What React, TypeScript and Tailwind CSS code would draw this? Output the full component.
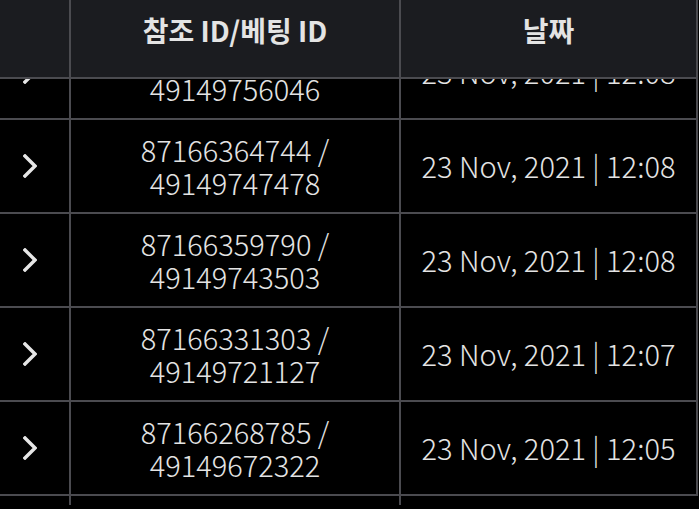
const rows = [
  { ref: '87166372210', bet: '49149756046', date: '23 Nov, 2021 | 12:08' },
  { ref: '87166364744', bet: '49149747478', date: '23 Nov, 2021 | 12:08' },
  { ref: '87166359790', bet: '49149743503', date: '23 Nov, 2021 | 12:08' },
  { ref: '87166331303', bet: '49149721127', date: '23 Nov, 2021 | 12:07' },
  { ref: '87166268785', bet: '49149672322', date: '23 Nov, 2021 | 12:05' },
]

function Chevron() {
  return (
    <svg width="14" height="24" viewBox="0 0 14 24" fill="none">
      <polyline points="2,2 12,12 2,22" stroke="#e6e6e6" strokeWidth="3.4" strokeLinecap="square" />
    </svg>
  )
}

export default function App() {
  return (
    <div
      className="w-[699px] h-[509px] bg-black overflow-hidden text-[#e4e4e4]"
      style={{ fontFamily: '"Noto Sans CJK KR", "Noto Sans", sans-serif' }}
    >
      <div className="w-[698px]">
        <div className="flex h-[79px] bg-[#1b1c20] border-b-2 border-[#4b4b50]">
          <div className="w-[71px] border-r-2 border-[#4b4b50]" />
          <div className="w-[330px] border-r-2 border-[#4b4b50] flex justify-center pt-[9px] text-[28px] font-bold">
            참조 ID/베팅 ID
          </div>
          <div className="w-[297px] border-r-2 border-[#4b4b50] flex justify-center pt-[9px] text-[28px] font-bold">
            날짜
          </div>
        </div>
        <div className="h-[430px] overflow-hidden">
          <div className="-mt-[53px]">
            {rows.map((r) => (
              <div key={r.ref} className="flex h-[94px] border-b-2 border-[#4b4b50]">
                <div className="w-[71px] border-r-2 border-[#4b4b50] flex items-center pl-[23px]">
                  <Chevron />
                </div>
                <div className="w-[330px] border-r-2 border-[#4b4b50] flex flex-col items-center justify-center text-[29px] leading-[33px] font-light">
                  <span>{r.ref} /</span>
                  <span>{r.bet}</span>
                </div>
                <div className="w-[297px] border-r-2 border-[#4b4b50] flex items-center justify-center text-[29px] font-light">
                  {r.date}
                </div>
              </div>
            ))}
            <div className="flex h-[9px]">
              <div className="w-[71px] border-r-2 border-[#4b4b50]" />
              <div className="w-[330px] border-r-2 border-[#4b4b50]" />
            </div>
          </div>
        </div>
      </div>
    </div>
  )
}
